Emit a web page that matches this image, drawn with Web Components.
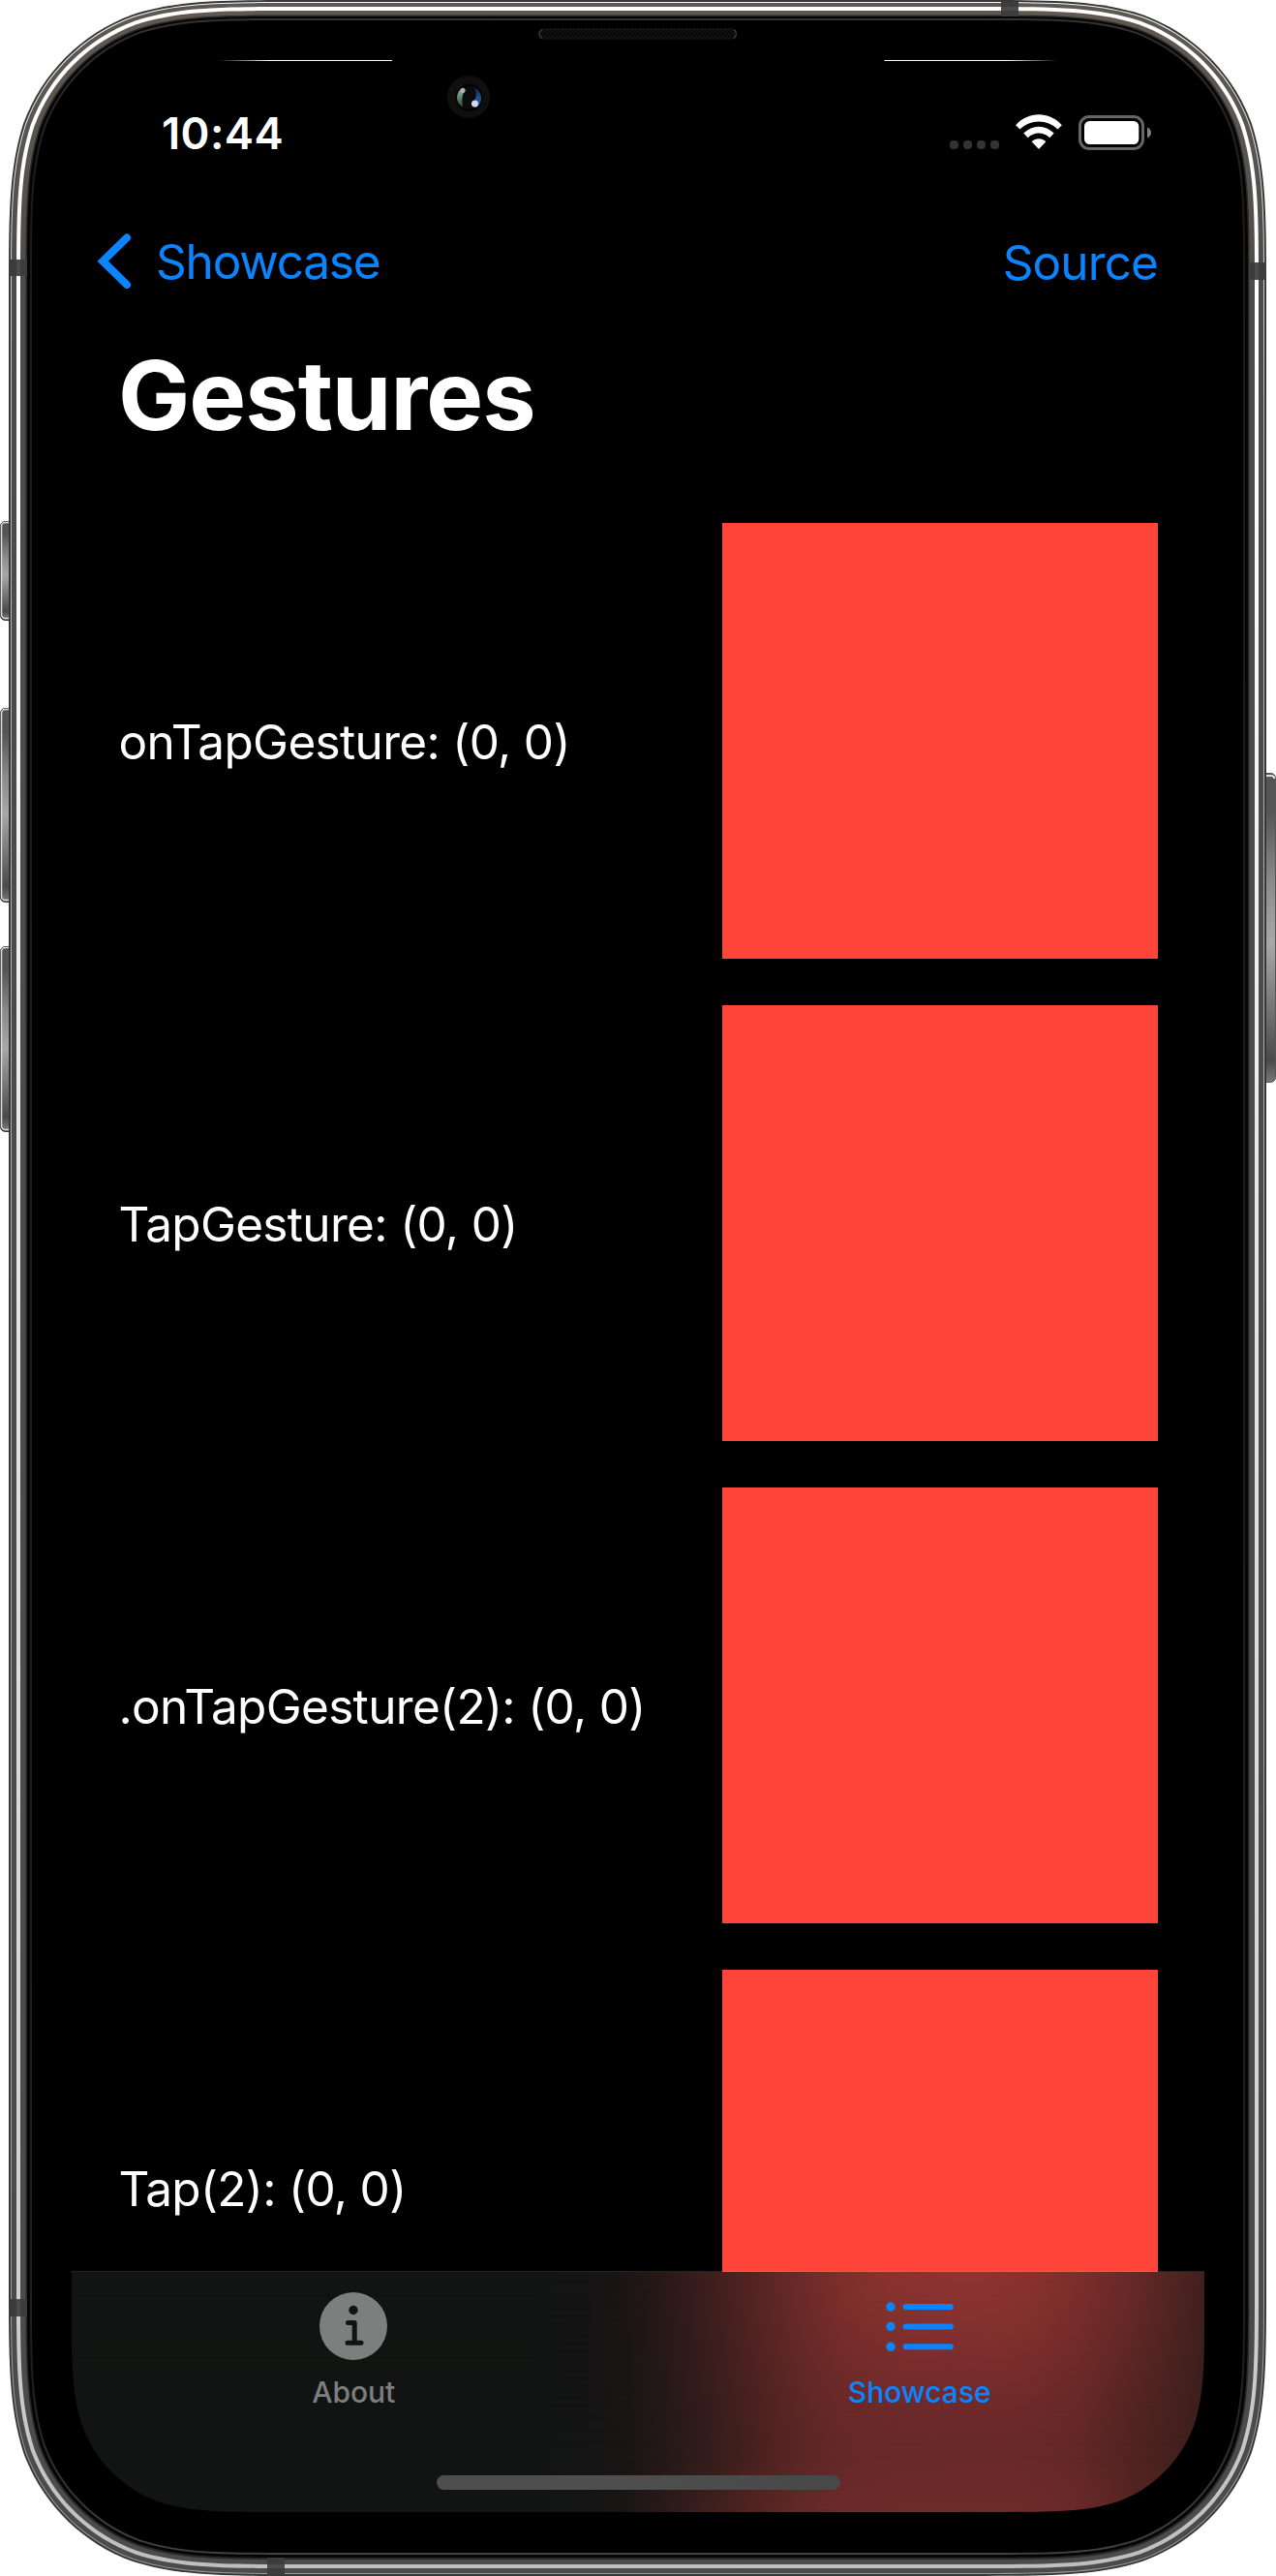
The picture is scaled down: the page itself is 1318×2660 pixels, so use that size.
<!DOCTYPE html>
<html lang="en">
<head>
<meta charset="utf-8">
<title>Gestures</title>
<style>
  html, body { margin: 0; background: #fff; }
  body { font-family: Inter, "Liberation Sans", sans-serif; -webkit-font-smoothing: antialiased; }
</style>
</head>
<body>
<phone-device>
  <status-bar time="10:44"></status-bar>
  <nav-bar>
    <nav-link slot="leading" back style="--track:-1.2px;--drop:2px">Showcase</nav-link>
    <nav-link slot="trailing" style="--track:-.9px;--drop:4px">Source</nav-link>
  </nav-bar>
  <large-title>Gestures</large-title>
  <gesture-list>
    <gesture-row>onTapGesture: (0, 0)</gesture-row>
    <gesture-row>TapGesture: (0, 0)</gesture-row>
    <gesture-row>.onTapGesture(2): (0, 0)</gesture-row>
    <gesture-row>Tap(2): (0, 0)</gesture-row>
  </gesture-list>
  <tab-bar>
    <tab-item>
      <svg slot="icon" width="70" height="70" viewBox="0 0 70 70"><circle cx="35" cy="35" r="35" fill="#7d7f7e"/><circle cx="35" cy="18.5" r="4.7" fill="#121413"/><path d="M29.5 31.6H36.2V52M29 52.2H43" fill="none" stroke="#121413" stroke-width="5" stroke-linecap="round" stroke-linejoin="round"/></svg>
      About
    </tab-item>
    <tab-item active>
      <svg slot="icon" width="70" height="70" viewBox="0 0 70 70"><g fill="#0a84ff"><circle cx="5" cy="15" r="4.7"/><circle cx="5" cy="35.5" r="4.7"/><circle cx="5" cy="56.3" r="4.7"/><rect x="17.6" y="12" width="52.2" height="6" rx="3"/><rect x="17.6" y="32.6" width="52.2" height="6" rx="3"/><rect x="17.6" y="53.3" width="52.2" height="6" rx="3"/></g></svg>
      Showcase
    </tab-item>
  </tab-bar>
</phone-device>

<script>
const define = (name, html, init) => {
  const tpl = document.createElement('template');
  tpl.innerHTML = html;
  customElements.define(name, class extends HTMLElement {
    constructor() {
      super();
      this.attachShadow({ mode: 'open' }).append(tpl.content.cloneNode(true));
    }
    connectedCallback() { if (init) init(this, this.shadowRoot); }
  });
};

// Outline of a rectangle with continuous corners (x0,y0)-(x1,y1)
const squircle = (x0, y0, x1, y1, r) => {
  const k = [1.52866, 1.08849, 0.86841, 0.63149, 0.37282, 0.16906, 0.07491].map(v => v * r);
  const [a, b, c, d, e, f, g] = k;
  return `M${x0 + a} ${y0}H${x1 - a}` +
    `C${x1 - b} ${y0} ${x1 - c} ${y0} ${x1 - d} ${y0 + g}C${x1 - e} ${y0 + f} ${x1 - f} ${y0 + e} ${x1 - g} ${y0 + d}C${x1} ${y0 + c} ${x1} ${y0 + b} ${x1} ${y0 + a}` +
    `V${y1 - a}C${x1} ${y1 - b} ${x1} ${y1 - c} ${x1 - g} ${y1 - d}C${x1 - f} ${y1 - e} ${x1 - e} ${y1 - f} ${x1 - d} ${y1 - g}C${x1 - c} ${y1} ${x1 - b} ${y1} ${x1 - a} ${y1}` +
    `H${x0 + a}C${x0 + b} ${y1} ${x0 + c} ${y1} ${x0 + d} ${y1 - g}C${x0 + e} ${y1 - f} ${x0 + f} ${y1 - e} ${x0 + g} ${y1 - d}C${x0} ${y1 - c} ${x0} ${y1 - b} ${x0} ${y1 - a}` +
    `V${y0 + a}C${x0} ${y0 + b} ${x0} ${y0 + c} ${x0 + g} ${y0 + d}C${x0 + f} ${y0 + e} ${x0 + e} ${y0 + f} ${x0 + d} ${y0 + g}C${x0 + c} ${y0} ${x0 + b} ${y0} ${x0 + a} ${y0}Z`;
};

define('device-frame', `
<style>:host{display:block;width:1318px;height:2660px}svg{display:block}</style>
<svg width="1318" height="2660" viewBox="0 0 1318 2660">
  <defs>
    <linearGradient id="steel" x1="0" y1="0" x2="0" y2="1"><stop offset="0" stop-color="#5f5850"/><stop offset=".06" stop-color="#57534e"/><stop offset=".11" stop-color="#4b4b4b"/><stop offset="1" stop-color="#4b4b4b"/></linearGradient>
    <linearGradient id="shine" x1="0" y1="0" x2="0" y2="1"><stop offset="0" stop-color="#fff"/><stop offset=".2" stop-color="#fbfbfb"/><stop offset=".45" stop-color="#e8e8ea"/><stop offset=".9" stop-color="#cfcfcf"/><stop offset="1" stop-color="#bfbfbf"/></linearGradient>
    <linearGradient id="rim" x1="0" y1="0" x2="0" y2="1"><stop offset="0" stop-color="#f4f8f7"/><stop offset=".1" stop-color="#c8cccb"/><stop offset=".2" stop-color="#b4b4b4"/><stop offset="1" stop-color="#999"/></linearGradient>
    <linearGradient id="lip" x1="0" y1="0" x2="0" y2="1"><stop offset="0" stop-color="#333"/><stop offset=".07" stop-color="#1c1c1c"/><stop offset=".93" stop-color="#1f1f1f"/><stop offset="1" stop-color="#424242"/></linearGradient>
    <linearGradient id="key" x1="0" y1="0" x2="0" y2="1"><stop offset="0" stop-color="#555"/><stop offset=".12" stop-color="#555"/><stop offset=".35" stop-color="#8a8a8a"/><stop offset=".55" stop-color="#a8a8a8"/><stop offset=".75" stop-color="#777"/><stop offset=".93" stop-color="#4a4a4a"/><stop offset="1" stop-color="#777"/></linearGradient>
    <linearGradient id="edge" x1="0" y1="0" x2="1" y2="0"><stop offset="0" stop-color="#fff" stop-opacity="0"/><stop offset=".3" stop-color="#fff"/><stop offset="1" stop-color="#fff"/></linearGradient>
    <linearGradient id="glass-l" x1="0" y1="0" x2="0" y2="1"><stop offset="0" stop-color="#9fb5a8"/><stop offset=".5" stop-color="#5f8873"/><stop offset="1" stop-color="#2f4439"/></linearGradient>
    <linearGradient id="glass-r" x1="0" y1="0" x2="0" y2="1"><stop offset="0" stop-color="#0d2340"/><stop offset=".5" stop-color="#1d4f8c"/><stop offset="1" stop-color="#2a5fa5"/></linearGradient>
    <pattern id="mesh" width="4" height="4" patternUnits="userSpaceOnUse"><rect width="4" height="4" fill="#101010"/><rect width="2" height="2" fill="#080808"/><rect x="2" y="2" width="2" height="2" fill="#080808"/></pattern>
  </defs>
  <g id="keys"></g>
  <g id="layers"></g>
  <g fill="#3c3c3c">
    <path d="M1034 2h18v15h-18zM11 268h17v17H11zM1290 271h17v18h-17zM11 2374h17v18H11zM276 2641h18v18h-18z"/>
    <path fill="#4b4b4b" d="M1034 7h18v4h-18zM17 268h4v17h-4zM1296 271h4v18h-4zM17 2374h4v18h-4zM276 2648h18v4h-18z"/>
  </g>
  <rect x="225" y="62" width="180" height="1" fill="url(#edge)"/>
  <rect x="225" y="62" width="180" height="1" fill="url(#edge)" transform="translate(1318.500 0) scale(-1 1)"/>
  <rect x="556" y="30" width="205" height="10" rx="5" fill="url(#mesh)" stroke="#181818"/>
  <path d="M560 30.500a5 5 0 0 0 0 9M757.500 30.500a5 5 0 0 1 0 9" fill="none" stroke="#3c3c3c" stroke-width="1.200"/>
  <circle cx="484" cy="100" r="22" fill="#0f0f10"/>
  <circle cx="484.500" cy="101" r="14" fill="#020202"/>
  <circle cx="484.500" cy="101" r="11.500" fill="#0b0b0c"/>
  <path d="M478 90.500C470 95 470 107 478 110.500C477 103 477 98 480.500 92.500Z" fill="url(#glass-l)"/>
  <path d="M489.500 90C499 94 499.500 107 491.500 111C487.500 109 488 106 490.500 103C492.500 99 492 94 489.500 90Z" fill="url(#glass-r)"/>
  <circle cx="478" cy="93.500" r="2.500" fill="#a9b8b1"/><circle cx="490.500" cy="107" r="3.500" fill="#d9d6ee"/>
</svg>`, (el, root) => {
  // Edge insets of each shell layer: left/right, top, bottom, colour
  const layers = [
    [9, 0, 0, '#363838'], [11, 2, 2, 'url(#rim)'], [12, 3, 3, 'url(#steel)'], [17, 7, 8, 'url(#shine)'],
    [21, 11, 12, 'url(#steel)'], [26.5, 15.5, 17, '#2a2928'], [28, 17, 19, '#050505'], [31, 19, 22, 'url(#lip)'], [33, 21, 24, '#000']
  ];
  root.getElementById('layers').innerHTML = layers.map(([s, t, b, c]) =>
    `<path d="${squircle(s, t, 1317 - s, 2660 - b, 202 - (s - 9))}" fill="${c}"/>`).join('');
  const left = [[538, 103], [731, 201], [977, 192]].map(([y, h]) =>
    `<rect x=".5" y="${y + .5}" width="20" height="${h - 1}" rx="5" fill="#555" stroke="#333"/><rect x="1.500" y="${y + 1.5}" width="18" height="${h - 4}" rx="4" fill="url(#key)" stroke="#ddd" stroke-width="1.500"/>`).join('');
  root.getElementById('keys').innerHTML = left +
    `<rect x="1297.500" y="798.500" width="20" height="319" rx="5" fill="url(#key)" stroke="#555"/><path d="M1308 801H1313Q1316 801 1316.300 804" fill="none" stroke="#ddd" stroke-width="2"/>`;
});

// The shell sits behind the screen; both share one grid cell.
define('phone-device', `
<style>
  :host{display:grid;width:1318px;height:2660px;overflow:hidden}
  device-frame,.screen{grid-area:1/1}
  .screen{display:flex;flex-direction:column;width:1170px;height:2532px;margin:62px 0 0 74px}
</style>
<device-frame></device-frame><div class="screen"><slot></slot></div>`, (el, root) => {
  root.querySelector('.screen').style.clipPath = `path("${squircle(0, 0, 1170, 2532, 142)}")`;
});

define('status-bar', `
<style>
  :host{display:flex;justify-content:space-between;align-items:center;height:41px;padding:55px 55px 45px 93px;color:#fff}
  .time{font-size:45.400px;font-weight:600;letter-spacing:.4px;line-height:40px;padding-top:1px}
  svg{display:block}
</style>
<span class="time"></span>
<svg width="212" height="41" viewBox="977 117 212 41">
  <g fill="#333"><rect x="981" y="145" width="9" height="9" rx="4"/><rect x="995" y="145" width="9" height="9" rx="4"/><rect x="1009" y="145" width="9" height="9" rx="4"/><rect x="1023" y="145" width="9" height="9" rx="4"/></g>
  <g fill="#fff">
    <path d="M1049.200 129.200C1062.500 114.700 1083.500 114.700 1096.800 129.200L1092.600 133.600C1081.500 122.700 1064.500 122.700 1053.400 133.600Z"/>
    <path d="M1057.300 137.600C1066.300 128.400 1079.700 128.400 1088.700 137.600L1084.300 142.200C1077.500 136 1068.500 136 1061.700 142.200Z"/>
    <path d="M1065.600 146.200C1069.700 142.300 1076.300 142.300 1080.400 146.200L1073 154Z"/>
  </g>
  <rect x="1115.500" y="120.500" width="65" height="33" rx="9.500" fill="none" stroke="#666" stroke-width="3"/>
  <rect x="1120" y="125" width="56.300" height="24" rx="5.500" fill="#fff"/>
  <path d="M1185 131.500C1190.300 133.700 1190.300 140.300 1185 142.500Z" fill="#808080"/>
</svg>`, (el, root) => { root.querySelector('.time').textContent = el.getAttribute('time'); });

define('nav-bar', `
<style>:host{display:flex;justify-content:space-between;align-items:center;height:132px;padding:0 48px 0 26px}</style>
<slot name="leading"></slot><slot name="trailing"></slot>`);

define('nav-link', `
<style>
  :host{display:flex;align-items:center;gap:25px;color:#0a84ff;font-size:49.500px;line-height:60px;letter-spacing:var(--track,0)}
  span{padding-top:var(--drop,0)}
  svg{display:none}
  :host([back]) svg{display:block}
</style>
<svg width="36" height="58" viewBox="0 0 36 58"><path d="M31 5.500L6.200 29.700L31 54" fill="none" stroke="#0a84ff" stroke-width="8" stroke-linecap="round" stroke-linejoin="miter"/></svg>
<span><slot></slot></span>`);

define('large-title', `
<style>:host{display:block;height:146px;padding:0 48px 59px;line-height:146px;font-size:99px;font-weight:700;letter-spacing:-1.030px;color:#fff}</style><slot></slot>`);

define('gesture-list', `
<style>:host{display:flex;flex-direction:column;gap:48px;flex:1;min-height:0;overflow:hidden;padding:0 48px}</style><slot></slot>`);

define('gesture-row', `
<style>
  :host{display:flex;justify-content:space-between;align-items:center;flex:none;height:450px;color:#fff}
  span{font-size:49.500px;line-height:60px;letter-spacing:-.670px;padding:2px 0 0 .5px;white-space:nowrap}
  .pad{width:450px;height:450px;background:#ff453a}
</style>
<span><slot></slot></span><div class="pad"></div>`);

define('tab-bar', `
<style>
  :host{display:flex;flex-direction:column;position:relative;flex:none;height:249px;box-sizing:border-box;border-top:1px solid #222423;
    background:linear-gradient(90deg,#121413 0,#121413 480px,#141414 530px,#191615 575px,#251918 615px,#381e1c 670px,#4a211f 710px,#5a2625 750px,#652828 796px,#692929 866px,#6a2929 970px,#632727 1040px,#502321 1100px,#42201e 1145px,#3a1f1c 1170px)}
  .glow,.base,.line{position:absolute;inset:0}
  .glow{background:linear-gradient(90deg,#121413 0,#121413 480px,#151414 535px,#1c1615 575px,#291918 612px,#3f1f1d 662px,#552424 704px,#6a2a29 750px,#7f2f2b 800px,#89332f 850px,#8c3431 930px,#88322d 990px,#7b2e2b 1040px,#682929 1095px,#502422 1140px,#40201e 1170px);
    -webkit-mask:linear-gradient(#000,rgba(0,0,0,.850) 40px,rgba(0,0,0,.500) 90px,rgba(0,0,0,.150) 140px,transparent 180px);mask:linear-gradient(#000,rgba(0,0,0,.850) 40px,rgba(0,0,0,.500) 90px,rgba(0,0,0,.150) 140px,transparent 180px)}
  .base{background:linear-gradient(90deg,transparent 560px,rgba(125,48,46,.300) 780px,rgba(125,48,46,.300) 1000px,transparent 1160px);-webkit-mask:linear-gradient(transparent 190px,#000);mask:linear-gradient(transparent 190px,#000)}
  .line{bottom:auto;top:-1px;height:1px;left:672px;width:450px;background:#ff584e}
  .tabs{display:flex;position:relative;padding-top:21px}
  .tabs ::slotted(*){flex:1}
  .home{position:relative;width:417px;height:15px;border-radius:8px;margin:auto auto 23px;left:.5px;background:linear-gradient(90deg,#4e4e4e 50%,#484848)}
</style>
<div class="glow"></div><div class="base"></div><div class="line"></div>
<div class="tabs"><slot></slot></div><div class="home"></div>`);

define('tab-item', `
<style>
  :host{display:flex;flex-direction:column;align-items:center;gap:15px;padding-right:2px;color:#7d7f7e;font-size:30px;font-weight:500;line-height:36px}
  :host([active]){color:#0a84ff;padding-right:3px}
  ::slotted(svg){display:block}
</style>
<slot name="icon"></slot><span><slot></slot></span>`);
</script>
</body>
</html>
